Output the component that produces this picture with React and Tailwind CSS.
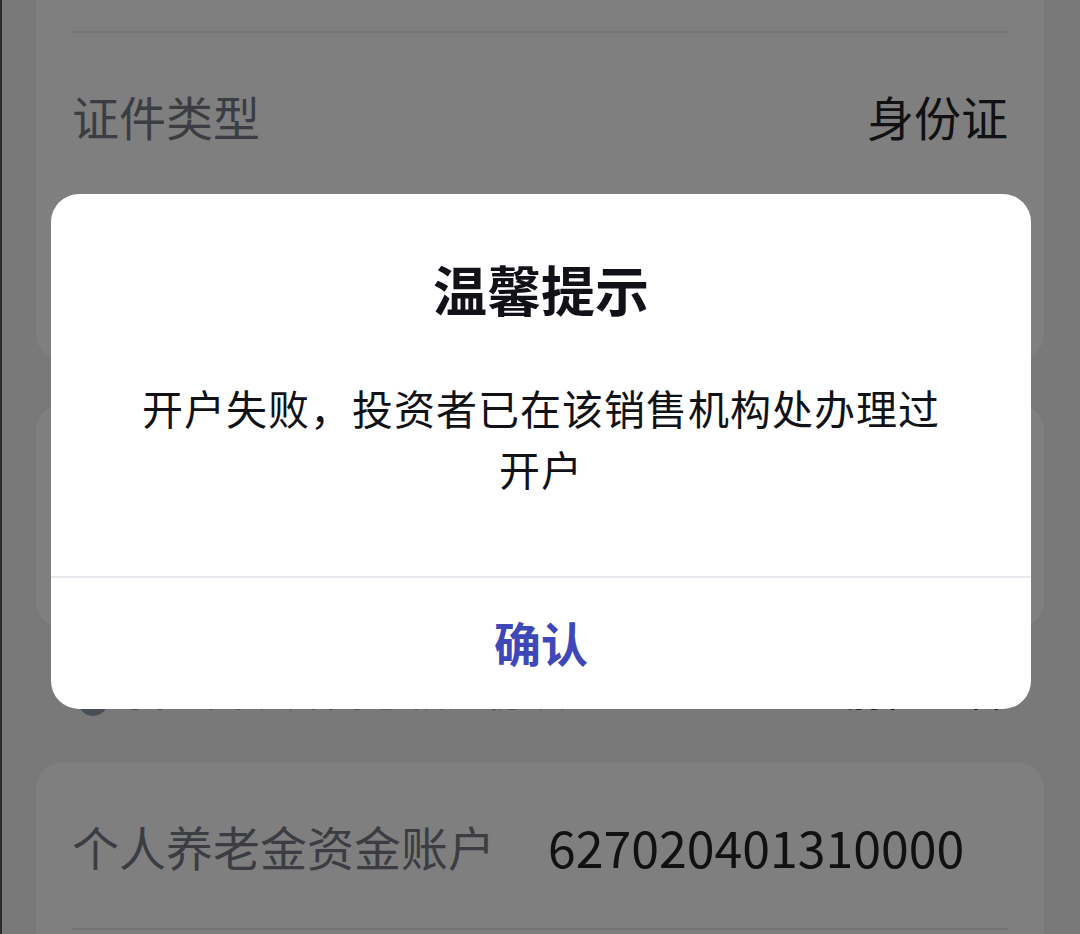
import React from "react";

function Row({ label, value }) {
  return (
    <div className="flex h-full items-center justify-between px-[36px]">
      <span className="text-[47px] leading-none text-[#787a86]">{label}</span>
      <span className="text-[47px] leading-none text-[#222226]">{value}</span>
    </div>
  );
}

export default function App() {
  return (
    <div
      className="relative h-[934px] w-[1080px] overflow-hidden border-l-[2px] border-[#2b2b2b] bg-[#f2f2f2]"
      style={{ fontFamily: '"Noto Sans CJK SC", "Noto Sans", sans-serif' }}
    >
      {/* page content */}
      <div className="flex flex-col pl-[34px] pr-[36px]">
        {/* card 1 */}
        <div className="flex h-[360px] flex-col rounded-b-[26px] bg-white pt-[31px]">
          <div className="mx-[36px] h-[2px] bg-[#e9e9eb]" />
          <div className="h-[164px]">
            <Row label="证件类型" value="身份证" />
          </div>
          <div className="mx-[36px] h-[2px] bg-[#e9e9eb]" />
          <div className="flex-1">
            <Row label="证件号码" value="" />
          </div>
        </div>

        {/* card 2 */}
        <div className="mt-[45px] flex h-[222px] flex-col rounded-[26px] bg-white">
          <div className="h-[110px]">
            <Row label="手机号码" value="" />
          </div>
          <div className="mx-[36px] h-[2px] bg-[#e9e9eb]" />
          <div className="flex-1">
            <Row label="验证码" value="" />
          </div>
        </div>

        {/* agreement row */}
        <div className="flex h-[136px] items-center justify-between pb-[12px] pl-[42px] pr-[40px]">
          <div className="flex items-center gap-[18px]">
            <span className="h-[30px] w-[30px] translate-y-[12px] rounded-full bg-[#949cae]" />
            <span className="text-[40px] leading-none text-[#9a9caa]">我已阅读并同意相关协议</span>
          </div>
          <span className="text-[40px] leading-none text-[#222236]">前往查看</span>
        </div>

        {/* card 3 */}
        <div className="flex h-[240px] flex-col rounded-t-[26px] bg-white">
          <div className="flex h-[165px] items-center gap-[53px] px-[36px]">
            <span className="text-[47px] leading-none text-[#787a86]">个人养老金资金账户</span>
            <span className="text-[50px] leading-none text-[#222226]">627020401310000</span>
          </div>
          <div className="mx-[36px] h-[2px] bg-[#e9e9eb]" />
        </div>
      </div>

      {/* mask */}
      <div className="absolute inset-0 bg-black/50" />

      {/* dialog */}
      <div className="absolute left-[49px] top-[194px] flex h-[515px] w-[980px] flex-col rounded-[28px] bg-white">
        <div className="flex flex-1 flex-col items-center">
          <div className="pt-[57px] text-[54px] font-bold leading-[76px] text-[#111118]">温馨提示</div>
          <div className="mt-[50px] px-[72px] text-center text-[41px] leading-[61px] tracking-[1px] text-[#111118]">
            开户失败，投资者已在该销售机构处办理过开户
          </div>
        </div>
        <div className="h-[2px] bg-[#e8eaef]" />
        <div className="flex h-[131px] items-center justify-center">
          <span className="-translate-y-[2px] text-[47px] font-bold leading-none text-[#3f48b8]">确认</span>
        </div>
      </div>
    </div>
  );
}
